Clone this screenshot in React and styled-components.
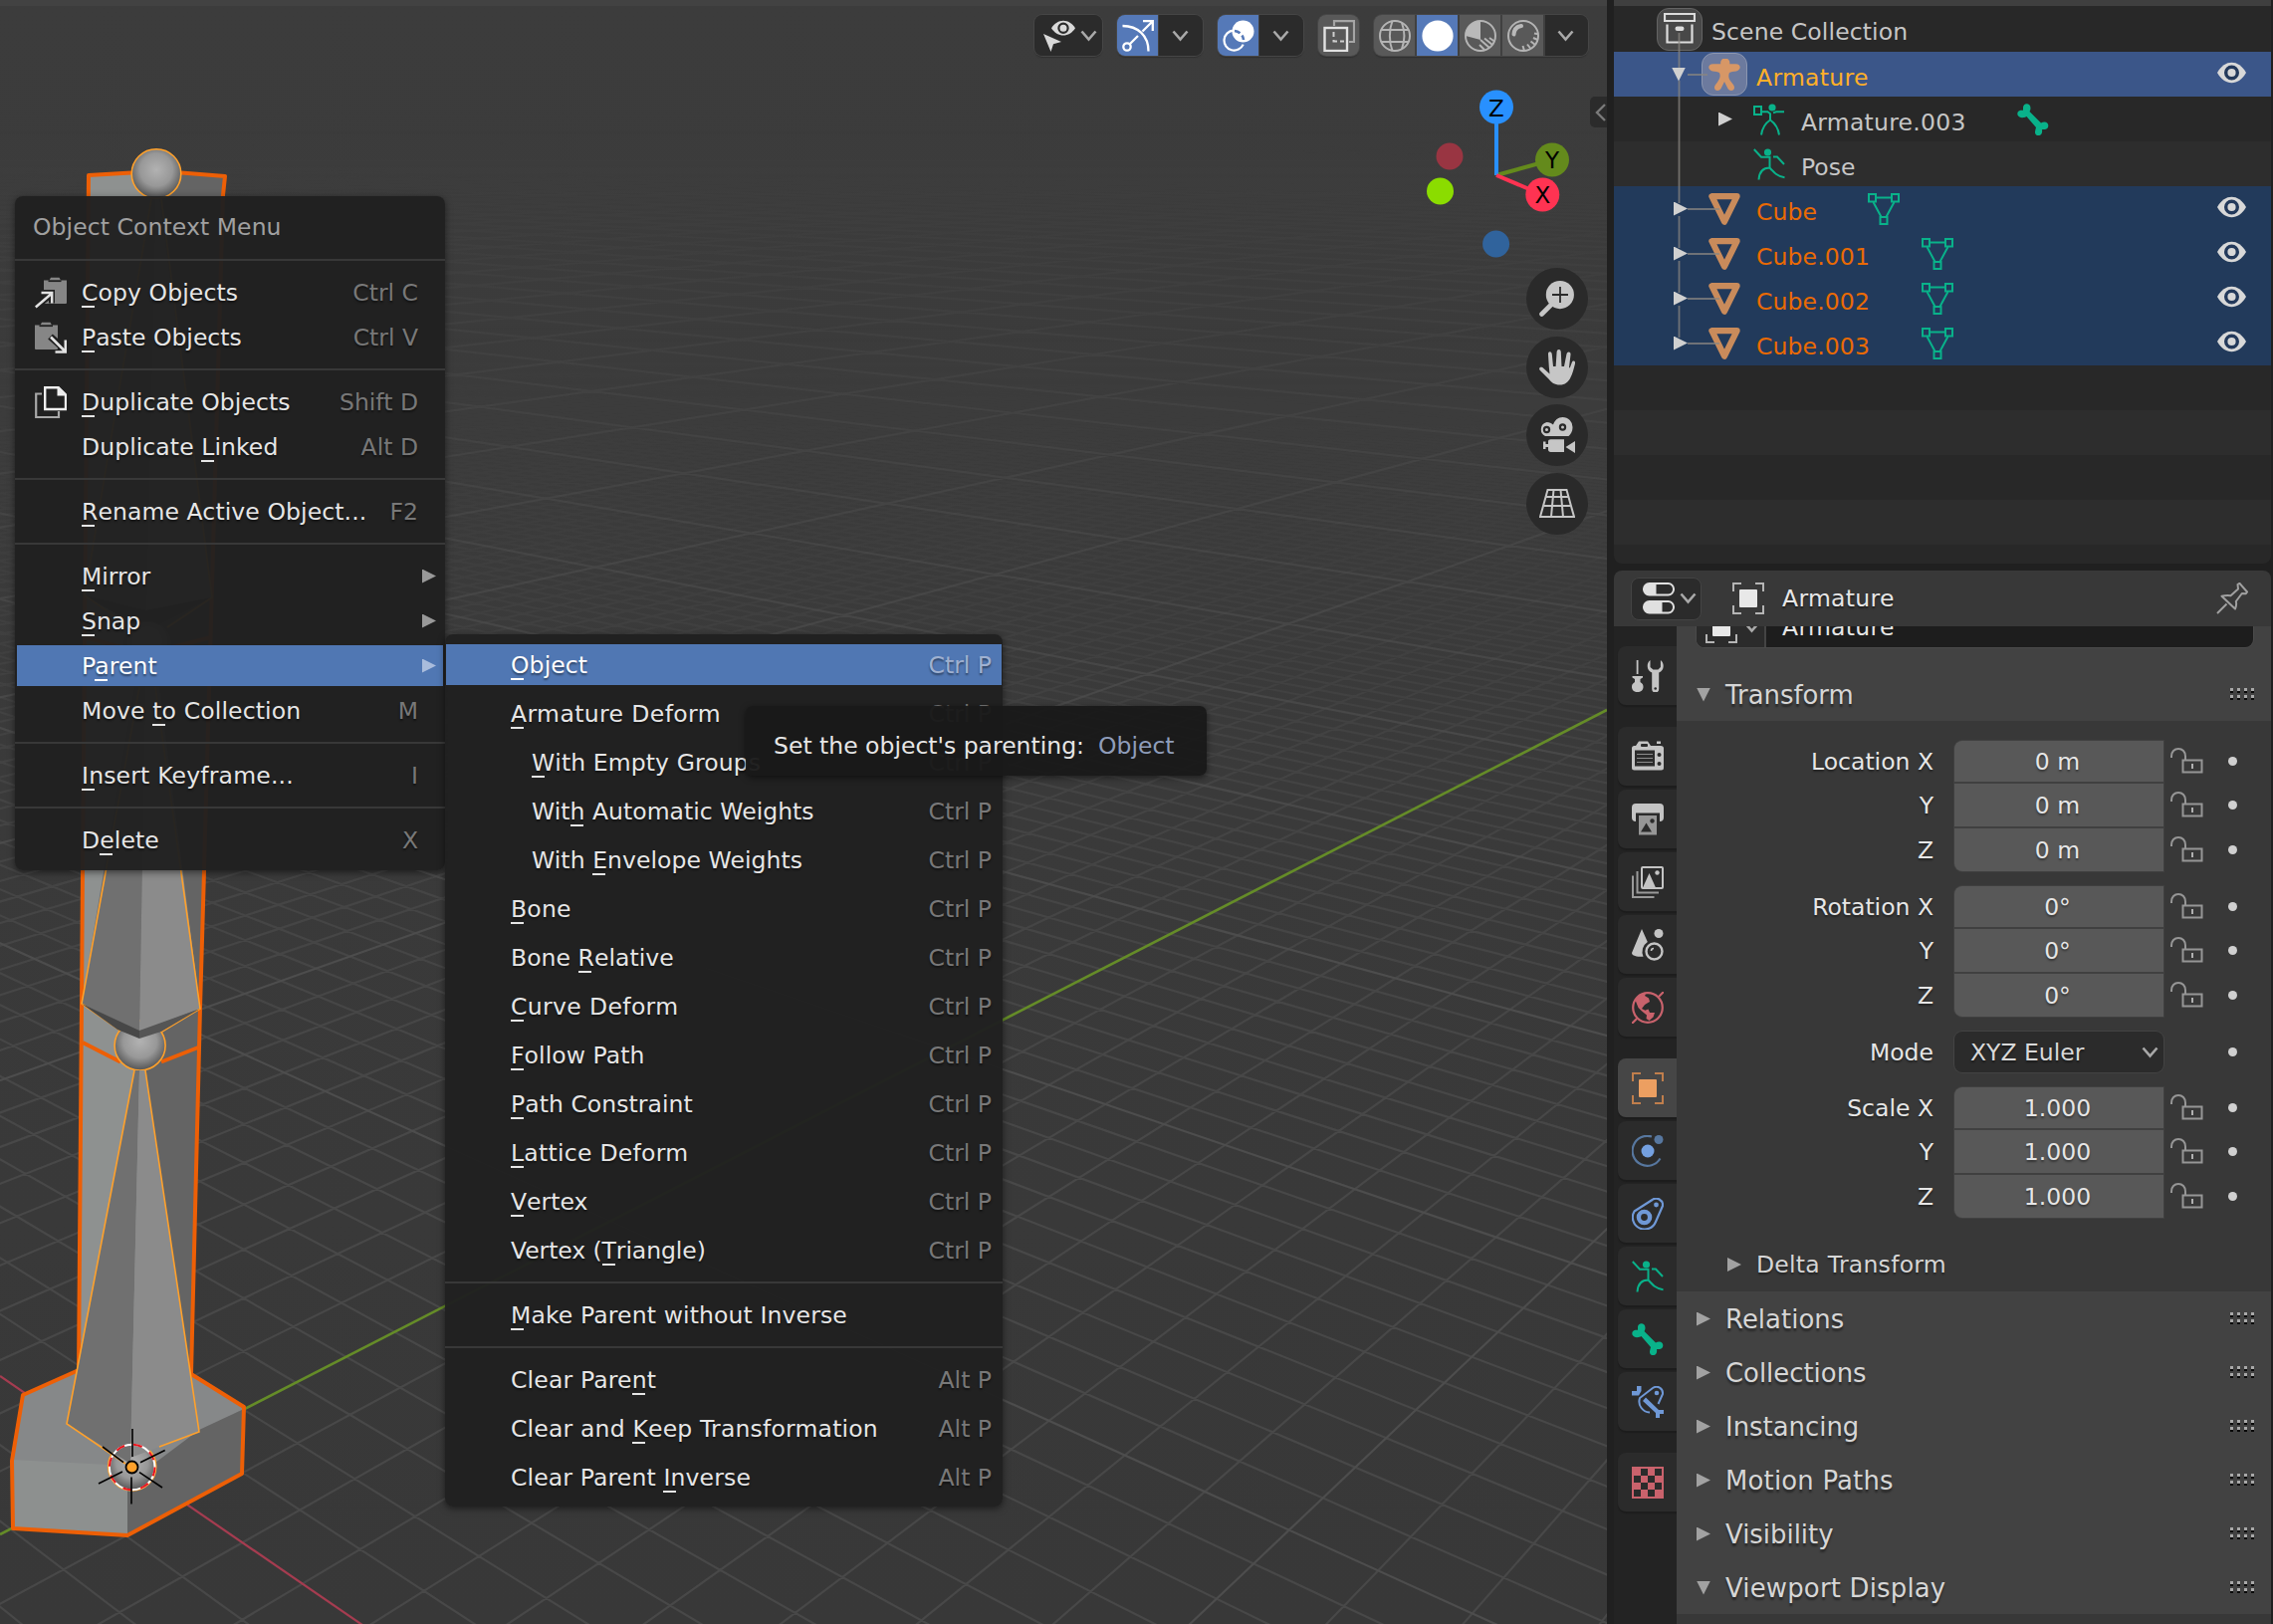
import React from "react";
import styled, { createGlobalStyle, css } from "styled-components";

const Global = createGlobalStyle`
  * { box-sizing: border-box; }
  html, body { margin: 0; padding: 0; background: #202020; overflow: hidden; }
  body { font-family: "DejaVu Sans", sans-serif; font-size: 23.5px; color: #e6e6e6; }
  svg { display: block; flex: none; }
`;

/* ------------------------------------------------------------------ icons */

const L = "#c4c4c4";
const TEAL = "#09b28a";
const ORANGE = "#c98b5b";
const BLUE = "#6f98d6";
const RED = "#c9626c";

const glyphs = {
  copy: (
    <>
      <path d="M9 3.500h5.500L16 .8h8.500L26 3.500h6V26q0 1-1 1H10q-1 0-1-1z" fill="#868686" />
      <path d="M13.500 4.200h13" stroke="#202020" strokeWidth="1.800" />
      <path d="M0 30.500 16 18" stroke="#202020" strokeWidth="6.500" />
      <path d="M6.500 16H17v10.500" stroke="#202020" strokeWidth="6" fill="none" />
      <path d="M.8 30.500 16 17.500M6.500 16H17.200v10.500" stroke="#e2e2e2" strokeWidth="2.500" fill="none" />
    </>
  ),
  paste: (
    <>
      <path d="M0 3.500h5.500L7 .8h8.500L17 3.500h6V27q0 1-1 1H1q-1 0-1-1z" fill="#868686" />
      <path d="M4.500 4.200h13.500" stroke="#202020" strokeWidth="1.800" />
      <path d="M15.500 15 30 28" stroke="#202020" strokeWidth="7" />
      <path d="M16 15.500 30 29.500M30.800 18.500v12H20.500" stroke="#e2e2e2" strokeWidth="2.600" fill="none" />
    </>
  ),
  duplicate: (
    <>
      <path d="M7 7.500H1.200v23.500H24V25" fill="none" stroke="#a8a8a8" strokeWidth="2.200" />
      <path d="M10.200 1.200h13.500L31 8.500V23H10.200z" fill="none" stroke="#efefef" strokeWidth="2.400" />
      <path d="M22.500 1v8.500H31z" fill="#efefef" />
    </>
  ),
  eyeCursor: (
    <>
      <path d="M8 8.200C11 3.500 15.500.8 20 .8s9 2.700 12 7.400c-3 4.700-7.500 7.300-12 7.300S11 12.900 8 8.200z" fill="#d9d9d9" />
      <circle cx="20" cy="8.200" r="4.600" fill="none" stroke="#2b2b2b" strokeWidth="2.200" />
      <path d="M0 14l18 8-8 2.200L7.500 32z" fill="#d9d9d9" />
    </>
  ),
  gizmo: (
    <g fill="none" stroke="#fff" strokeWidth="2.300">
      <path d="M.5 6C16 6 26.500 16 26.500 31.500" />
      <path d="M21 1.200h9.800V11M30.500 1.500 20.500 11.500" />
      <circle cx="5" cy="27" r="3.700" />
      <path d="M8 24l8-8" />
    </g>
  ),
  overlay: (
    <>
      <circle cx="20.500" cy="11.500" r="11" fill="#fff" />
      <path d="M11 10.600a10 10 0 1 0 9.700 14" fill="none" stroke="#fff" strokeWidth="2.200" />
      <path d="M12 11a10 10 0 0 1 9 9" fill="none" stroke="#5579b8" strokeWidth="2.600" strokeDasharray="6 3" />
    </>
  ),
  xray: (
    <g fill="none">
      <path d="M11 6V1.200h20V22h-5" stroke="#a5a5a5" strokeWidth="2.200" />
      <rect x="1.500" y="8" width="22.500" height="23" stroke="#e2e2e2" strokeWidth="2.400" />
      <path d="M10.500 12v9.500H21" stroke="#cfcfcf" strokeWidth="2" strokeDasharray="5 3" />
    </g>
  ),
  wire: (
    <g fill="none" stroke="#b4b4b4" strokeWidth="2">
      <circle cx="16" cy="16" r="15" />
      <path d="M2.500 10h27M2.500 22h27M13.500 1c-3.500 9-3.500 21 0 30M23 3c3 8 3 18 0 26" />
    </g>
  ),
  solid: <circle cx="16" cy="16" r="15.600" fill="#fff" />,
  material: (
    <>
      <circle cx="16" cy="16" r="15" fill="none" stroke="#b4b4b4" strokeWidth="2" />
      <path d="M16 20V1A15 15 0 0 0 1 16z" fill="#b9b9b9" />
      <path d="M16 20l9 8M20 18.500l8 6.500M25 18l5 3.500M15 25l5 5" stroke="#b4b4b4" strokeWidth="2" />
    </>
  ),
  rendered: (
    <>
      <circle cx="16" cy="16" r="15" fill="none" stroke="#b4b4b4" strokeWidth="2" />
      <path d="M6.500 14.500c.3-4.500 2.800-7.800 7.500-8.500" stroke="#b9b9b9" strokeWidth="4" fill="none" strokeLinecap="round" />
      <path d="M27 13.500l4 .8M26 18l4.500 2M23.500 21.500l4.500 3.500M20 24.500l3.500 4.500M15.500 26l1.500 5" stroke="#b4b4b4" strokeWidth="2" />
    </>
  ),
  zoom: (
    <>
      <circle cx="21.500" cy="14.500" r="14.500" fill="#c6c6c6" transform="scale(.97)" />
      <path d="M12 24 2.500 33.500" stroke="#c6c6c6" strokeWidth="4.600" strokeLinecap="round" />
      <path d="M13 14h16M21 6v16" stroke="#2a2a2a" strokeWidth="1.800" />
    </>
  ),
  hand: (
    <path
      d="M9.800 17.500 9 5c-.3-3.600 3.400-3.800 3.800-.3L14 17h2.600l1-14.500c.3-3.300 4-3.300 4.200 0L22.500 17H25l2.500-12.500c.7-3.200 4.500-2.600 4 .8L30 18l.8.500 2-5.500c1-2.500 4-1.500 3.200 1.200-1.200 4.800-2.400 9.800-4.600 14-2.300 4.600-5.400 7.300-10.800 7.300-5.300 0-8.300-2.200-11.200-6L.6 20.800C-.8 18.400 1 17 3.300 18l7.200 6.500z"
      fill="#c6c6c6"
    />
  ),
  camera: (
    <>
      <path d="M7.500 5c3 0 4.500 1 6.500 2.500C15.500 3 19 0 23.500 0a10 10 0 0 1 10 10.500c0 4-2 6.500-4 8.500H6a7.500 7.500 0 0 1 1.500-14z" fill="#c6c6c6" />
      <circle cx="7.500" cy="12.500" r="2.600" fill="none" stroke="#2a2a2a" strokeWidth="2.200" />
      <circle cx="23.500" cy="10" r="2.600" fill="none" stroke="#2a2a2a" strokeWidth="2.200" />
      <path d="M9 24.500c0-1.500 1-2.300 2.500-2.300H25V35H11.500C10 35 9 34 9 32.500V30H6.500v2H4v-7.500h2.500V27H9zM26.500 30l9.500-6v12z" fill="#c6c6c6" />
    </>
  ),
  ortho: (
    <g fill="none" stroke="#c6c6c6" strokeWidth="2">
      <path d="M8.500 4h19L35 31H1zM7 11h22M5 20h26M14.500 4 12 31M21.500 4 24 31" />
    </g>
  ),
  collection: (
    <>
      <path d="M1 1h30v7H1zM3.500 11.500V29.500h25V11.500" fill="none" stroke="#dcdcdc" strokeWidth="2.200" />
      <rect x="11.500" y="13.500" width="9" height="4.500" rx="2.200" fill="#dcdcdc" />
    </>
  ),
  armature: (
    <path
      d="M4.500 5.200h7.800a4.600 4.600 0 1 1 8.900 0h6.300c5.500 0 5.500 6.300.5 7.200-3 .3-5.500.6-7 1.600-1.500 4-.5 6.500 2 9.600 2 2.400 3 4 3 5.400 0 3.500-4.800 4-6.500 1L16 23l-3.500 7c-1.700 3-6.500 2.500-6.500-1 0-1.700 1-3.200 3-5.600 2.200-3 3.500-5.200 2-9.400-1.500-1-4-1.300-7-1.600C-1 11.500-1 5.200 4.500 5.200z"
      fill="#d79766"
    />
  ),
  meshObject: <path d="M3.400 3.200h25.200L16 28.700z" fill="none" stroke={ORANGE} strokeWidth="6.200" strokeLinejoin="round" />,
  meshData: (
    <g fill="none" stroke={TEAL} strokeWidth="2">
      <path d="M9 4.500h14M5.500 9l7.800 14.500M26.500 9l-7.800 14.500" />
      <rect x="1" y="1" width="7" height="7.500" />
      <rect x="24" y="1" width="7" height="7.500" />
      <rect x="12.500" y="24" width="7" height="7" />
    </g>
  ),
  armatureData: (
    <>
      <rect x="1" y="3" width="7" height="8" fill="none" stroke={TEAL} strokeWidth="2" />
      <circle cx="19" cy="4" r="3.600" fill={TEAL} />
      <path d="M8 8.200h6.500l2.500 2V17M31 8.200h-8l-3 1.200M17 16.500c-6 4-8 8-9 15M17 16.500c6 4 8 8 9 15" fill="none" stroke={TEAL} strokeWidth="2" />
    </>
  ),
  pose: (
    <>
      <circle cx="14.500" cy="4" r="3.600" fill={TEAL} />
      <path d="M.8 1 8 8.800h8.500V20M20 8.500h4L31 16M16.500 19.500C9 19.500 6 24 5.500 31.500M16.500 19.500c4.500 5 8 9 15 9.700" fill="none" stroke={TEAL} strokeWidth="2" />
    </>
  ),
  bone: (
    <path
      d="M6 4c0-5 7.500-5 7.500.5 0 2-1 3.500-1 3.500L24 19.500c1-.6 2.200-1 3.500-1 5 0 5 7 .5 7.500-1.500.2-3 0-3 0 .2 1 .2 1.500 0 3-.8 4.500-7.500 4-7-.8.200-1.800.8-3.200 1-4.200L9.500 13c-1 .6-2.500 1.200-4.500 1.200C-1 14-1 7.500 3.500 6.800c1-.2 2.500 0 2.500 0z"
      fill={TEAL}
    />
  ),
  eye: (
    <>
      <path d="M0 16C4 9 9 5.800 14.500 5.800S25 9 29 16c-4 7-9 10.200-14.500 10.200S4 23 0 16z" fill="#d8d8d8" />
      <circle cx="14.500" cy="16" r="5.800" fill="none" stroke="#23395b" strokeWidth="3.400" />
    </>
  ),
  properties: (
    <>
      <rect x="1" y="1" width="30" height="11.500" rx="5.500" fill="#2b2b2b" stroke="#e0e0e0" strokeWidth="2" />
      <path d="M13.500 1H6.500a5.700 5.700 0 0 0 0 11.500h7z" fill="#e0e0e0" />
      <rect x="1" y="19" width="30" height="11.500" rx="5.500" fill="#2b2b2b" stroke="#e0e0e0" strokeWidth="2" />
      <path d="M19.500 19H6.500a5.700 5.700 0 0 0 0 11.500h13z" fill="#e0e0e0" />
    </>
  ),
  object: (
    <>
      <path d="M1 9V1h8M23 1h8v8M31 23v8h-8M9 31H1v-8" fill="none" stroke="#b5b5b5" strokeWidth="2" />
      <rect x="7" y="7" width="18" height="18" rx="1" fill="#e8e8e8" />
    </>
  ),
  pin: (
    <path d="M1 31 10.500 21.500M5.500 13.800c3.500-1 6.500-.8 9-.6L22 6.500 21.500 2 23.500.8 31 9.500l-1.200 1.800-4-.3-6 8c.8 3 .3 5-.8 7.500z" fill="none" stroke="#a0a0a0" strokeWidth="2" strokeLinejoin="round" />
  ),
  tool: (
    <>
      <path d="M5.600 0v14" stroke={L} strokeWidth="1.800" />
      <path d="M.5 16h10.500v1.500L8.500 19v3c2.500 1.500 3 3 3 5 0 3-2.500 5-5.800 5S0 30 0 27c0-2 .5-3.500 3-5v-3L.5 17.500z" fill={L} />
      <path d="M18.500 0c-2 1.500-2.800 3.700-2.800 6 0 3 1.800 5.500 4.500 6.500V29a3.500 3.500 0 0 0 7 0V12.500c2.700-1 4.500-3.500 4.500-6.500 0-2.300-.8-4.500-2.800-6v7l-2.500 2.500h-5L18.500 7z" fill={L} />
      <circle cx="23.700" cy="28.500" r="1.300" fill="#2b2b2b" />
    </>
  ),
  render: (
    <>
      <path d="M0 7.500Q0 5 2.500 5H4l3-4.500h9L19 5h10q3 0 3 2.500V27q0 2.500-2.500 2.500h-27Q0 29.500 0 27zM25 .5h4V3h-4z" fill={L} />
      <path d="M3 9.500h20V25.500H3z" fill="#2b2b2b" />
      <path d="M5 13.500h16M5 17.500h16M5 21.500h16" stroke="#8c8c8c" strokeWidth="1.200" />
      <circle cx="27.500" cy="14" r="2" fill="#2b2b2b" />
      <circle cx="27.500" cy="23" r="2" fill="#2b2b2b" />
      <rect x="9" y="3" width="7" height="3" rx="1" fill="#2b2b2b" />
    </>
  ),
  output: (
    <>
      <path d="M0 4q0-4 4-4h24q4 0 4 4v10q0 4-4 4V9.500H4V18q-4 0-4-4z" fill={L} />
      <path d="M7 12h18v19.500H7z" fill="#969696" />
      <path d="M9 28.500l5.500-9 5.500 9z" fill="#2b2b2b" />
      <circle cx="20.500" cy="17.500" r="2.200" fill="#2b2b2b" />
    </>
  ),
  viewLayer: (
    <>
      <rect x="10" y="1" width="21" height="21" rx="1" fill="none" stroke={L} strokeWidth="2" />
      <path d="M11 21.500 17.500 7l6.500 14.500z" fill={L} />
      <circle cx="25.500" cy="6.500" r="2.200" fill={L} />
      <path d="M5.500 5v21.500H27M1 9.500V31h21.500" fill="none" stroke="#9a9a9a" strokeWidth="2" />
    </>
  ),
  scene: (
    <>
      <path d="M10 0l5.800 13a12 12 0 0 0-4.300 14.800C7 28 0 27.500 0 24z" fill={L} />
      <circle cx="27" cy="4.500" r="4.500" fill={L} />
      <circle cx="22.500" cy="22.500" r="8" fill="none" stroke={L} strokeWidth="2.400" />
      <path d="M19.500 22c0-1.500 1-2.500 2.500-2.500" fill="none" stroke={L} strokeWidth="1.600" />
    </>
  ),
  world: (
    <>
      <circle cx="16" cy="16" r="14.800" fill="none" stroke={RED} strokeWidth="2.200" />
      <path d="M3.500 8.500C6 4.500 9.500 2 14 2l-1 2 4 2.500 1 3.500-5 3-3 4 3 1.500-.5 3-3-2.500-3-3zM12.500 19l4-1.500 1.500 3.500h5l-1.500 4.500-4 3.500-3-2 .5-3.500-2.500-2z" fill={RED} />
      <path d="M27 5l5-5M0 32l5-5" stroke={RED} strokeWidth="2.200" />
    </>
  ),
  objectTab: (
    <>
      <path d="M1 9V1h8M23 1h8v8M31 23v8h-8M9 31H1v-8" fill="none" stroke="#c07e4c" strokeWidth="2" />
      <rect x="7" y="7" width="18" height="18" rx="1" fill="#ec9f61" />
    </>
  ),
  physics: (
    <>
      <circle cx="16" cy="16" r="6.500" fill="#74a0e0" />
      <circle cx="27" cy="4.500" r="4.500" fill="#57779f" />
      <path d="M20 1.500a15 15 0 1 0 8.500 22" fill="none" stroke="#57779f" strokeWidth="2.200" />
    </>
  ),
  constraint: (
    <>
      <path d="M2.500 13.500 20.500 2C25-1.500 31.500 2 31 8L24 24A12 12 0 1 1 2.500 13.500z" fill="none" stroke={BLUE} strokeWidth="2.200" />
      <circle cx="12.500" cy="19.500" r="5.600" fill="none" stroke={BLUE} strokeWidth="4.400" />
      <circle cx="24.500" cy="7" r="2.400" fill={BLUE} />
    </>
  ),
  boneConstraint: (
    <>
      <path d="M18 26.500A11 11 0 0 1 8 12L21 2c4.500-3 10.500 0 10 6l-4.500 10" fill="none" stroke={BLUE} strokeWidth="2" />
      <circle cx="25" cy="7" r="2.300" fill={BLUE} />
      <path d="M0 5h5V0h4.500v5L7 9.500H0zM14 11.500 27 24h5v4h-4v4.500h-4V27L11 15z" fill={BLUE} />
    </>
  ),
  texture: (
    <>
      <rect x="1" y="1" width="30" height="30" fill="#2b2b2b" stroke={RED} strokeWidth="2" />
      <path d="M2 2h7v7H2zM16 2h7v7h-7zM9 9h7v7H9zM23 9h7v7h-7zM2 16h7v7H2zM16 16h7v7h-7zM9 23h7v7H9zM23 23h7v7h-7z" fill={RED} />
    </>
  ),
  lock: (
    <g fill="none" stroke="#969696" strokeWidth="2">
      <path d="M1 10V8.500C1 4 4 1 8 1s7 3 7 7.500V12" />
      <rect x="12.500" y="12.500" width="19" height="12" />
      <path d="M22 16v5" stroke="#b0b0b0" />
    </g>
  ),
};

function Glyph({ name, size = 32, box = 32 }) {
  return (
    <svg width={size} height={size} viewBox={`0 0 ${box} ${box}`}>
      {glyphs[name]}
    </svg>
  );
}

const Chevron = ({ color = "#a9a9a9" }) => (
  <svg width="17" height="12" viewBox="0 0 17 12">
    <path d="M1.500 1.500 8.500 9.500l7-8" fill="none" stroke={color} strokeWidth="2.600" />
  </svg>
);

const Triangle = styled.i`
  flex: none;
  width: 14px;
  height: 14px;
  background: ${(p) => p.$color || "#a2a2a2"};
  clip-path: ${(p) => (p.$open ? "polygon(0 0, 100% 0, 50% 100%)" : "polygon(0 0, 100% 50%, 0 100%)")};
`;

/* --------------------------------------------------------------- 3D scene */

const CAM = { cx: 30, cy: 867, f: 2201, d: 27.9 };

function project(X, Y) {
  const a = X / CAM.d;
  const b = Y / CAM.d;
  const w = 1 - 0.729 * a + 0.603 * b;
  return [
    CAM.cx + (CAM.f * (0.0465 + 0.634 * a + 0.767 * b)) / w,
    CAM.cy - (CAM.f * (-0.2753 - 0.2575 * a + 0.215 * b)) / w,
  ];
}

function segment(axis, n) {
  const far = 60000;
  let from;
  let to;
  if (axis === "y") {
    const near = ((0.25 - 1 + (0.729 * n) / CAM.d) / 0.603) * CAM.d;
    from = project(n, near);
    to = project(n, far);
  } else {
    const near = ((1 - 0.25 + (0.603 * n) / CAM.d) / 0.729) * CAM.d;
    from = project(near, n);
    to = project(-far, n);
  }
  return `M${from[0].toFixed(1)} ${from[1].toFixed(1)}L${to[0].toFixed(1)} ${to[1].toFixed(1)}`;
}

function gridPath(step, count, skip) {
  let d = "";
  for (let i = -count; i <= count; i++) {
    if (i === 0 || (skip && i % skip === 0)) continue;
    d += segment("x", i * step) + segment("y", i * step);
  }
  return d;
}

const minor = gridPath(1, 160, 10);
const major = gridPath(10, 60);

const SceneCanvas = styled.svg`
  position: absolute;
  inset: 0;
  width: 1614px;
  height: 1631px;
`;

const Scene = () => (
  <SceneCanvas viewBox="0 0 1614 1631">
    <defs>
      <linearGradient id="bg" x1="0" y1="0" x2="0" y2="1">
        <stop offset="0" stopColor="#3c3c3c" />
        <stop offset="1" stopColor="#383838" />
      </linearGradient>
      <linearGradient id="fadeMinor" x1="0" y1="0" x2="0" y2="1">
        <stop offset=".2" stopColor="#000" />
        <stop offset=".36" stopColor="#555" />
        <stop offset=".5" stopColor="#b8b8b8" />
        <stop offset=".7" stopColor="#fff" />
      </linearGradient>
      <linearGradient id="fadeMajor" x1="0" y1="0" x2="0" y2="1">
        <stop offset=".08" stopColor="#000" />
        <stop offset=".2" stopColor="#4c4c4c" />
        <stop offset=".35" stopColor="#999" />
        <stop offset=".6" stopColor="#fff" />
      </linearGradient>
      <mask id="mMinor"><rect width="1614" height="1631" fill="url(#fadeMinor)" /></mask>
      <mask id="mMajor"><rect width="1614" height="1631" fill="url(#fadeMajor)" /></mask>
      <radialGradient id="ball" cx=".5" cy=".42" r=".55">
        <stop offset="0" stopColor="#b2b2b2" />
        <stop offset=".6" stopColor="#989898" />
        <stop offset="1" stopColor="#5c5c5c" />
      </radialGradient>
    </defs>
    <rect width="1614" height="1631" fill="url(#bg)" />
    <g mask="url(#mMinor)"><path d={minor} stroke="#484848" strokeWidth="2.200" fill="none" /></g>
    <g mask="url(#mMajor)"><path d={major} stroke="#4d4d4d" strokeWidth="2.200" fill="none" /></g>
    <path d="M0 1382 364 1632" stroke="#a53c50" strokeWidth="2.200" />
    <path d="M0 1541 1614 713" stroke="#658c28" strokeWidth="2.600" />

    {/* foot block */}
    <path d="M77 1376 23 1401 12 1467 13 1535 128 1542 243 1480 245 1413 192 1380z" fill="#868889" />
    <path d="M12 1466 110 1471 128 1490V1542L13 1535z" fill="#8d908f" />
    <path d="M128 1490 200 1436 245 1415 243 1480 128 1542z" fill="#646464" />
    {/* leg block */}
    <path d="M88 176 157 174V1400H78L82 1008z" fill="#8e9190" />
    <path d="M157 174 226 176 224 196 205 875 201 1012 192 1400H140V700z" fill="#646464" />
    <g fill="none" stroke="#ed5f06" strokeWidth="4" strokeLinejoin="round">
      <path d="M132 173.500 89 176 83 875 82 1008 79 1376 23 1401 12 1467 13 1535 128 1542 243 1480 245 1413 192 1380 201 1012 205 875 224 196 226 177 182 173.500" />
      <path d="M83 1047 121 1066.500M162 1066.500 199 1052" />
      <path d="M85 640 130 652M165 652 212 640" />
    </g>

    {/* bones */}
    <path d="M157 175 85 598 147 613 160 300z" fill="#707070" />
    <path d="M157 175 213 600 147 613z" fill="#8b8b8b" />
    <path d="M85 598 147 613 213 600 147 634z" fill="#3c3c3c" />
    <ellipse cx="140.600" cy="1050" rx="25.500" ry="25" fill="url(#ball)" stroke="#ffa12b" strokeWidth="1.600" />
    <path d="M135 690 82 1008 140 1036 146 690z" fill="#707070" />
    <path d="M160 690 201 1013 140 1036 146 690z" fill="#8b8b8b" />
    <path d="M152 200 85 598 130 630M162 200 213 600 168 630M140 690 82 1008 120 1034.500M156 690 201 1013 162 1036.500" fill="none" stroke="#ffa12b" strokeWidth="1.600" />
    <path d="M82 1008 140 1035V1043L118 1034z" fill="#474747" />
    <path d="M201 1013 140 1035V1043L162 1036z" fill="#555" />
    <circle cx="148" cy="648" r="24" fill="url(#ball)" />
    <circle cx="157" cy="174.500" r="24.800" fill="url(#ball)" stroke="#ffa12b" strokeWidth="1.600" />
    <circle cx="132.700" cy="1473" r="24" fill="url(#ball)" stroke="#ffa12b" strokeWidth="1.600" />
    <path d="M135 1075 67 1430 131 1470 140 1075z" fill="#707070" />
    <path d="M146 1075 200 1438 131 1464 140 1075z" fill="#8b8b8b" />
    <path d="M135 1075 67 1430 126 1470M146 1075 200 1438 160 1453" fill="none" stroke="#ffa12b" strokeWidth="1.600" />

    {/* 3D cursor and origin point */}
    <circle cx="132.700" cy="1473.500" r="22.800" fill="none" stroke="#fff" strokeWidth="2" />
    <circle cx="132.700" cy="1473.500" r="22.800" fill="none" stroke="#e8141c" strokeWidth="2" strokeDasharray="9 9" />
    <path d="M133 1435V1463M132 1483.500V1510.500M103 1453 124 1468.700M141 1468.700 165.700 1456.500M99 1490 123 1478M140 1478.600 163 1494" stroke="#000" strokeWidth="1.600" />
    <circle cx="132.500" cy="1473.500" r="6" fill="#ffa12b" stroke="#000" strokeWidth="1.800" />
  </SceneCanvas>
);

/* --------------------------------------------------------- viewport header */

const Viewport = styled.main`
  position: relative;
  height: 1631px;
  overflow: hidden;
`;

const TopStrip = styled.div`
  position: relative;
  height: 6px;
  background: ${(p) => p.$bg};
`;

const HeaderBar = styled.header`
  position: relative;
  display: flex;
  justify-content: flex-end;
  gap: 15px;
  padding: 9px 19px 0 0;
`;

const ButtonGroup = styled.div`
  display: flex;
  gap: ${(p) => p.$gap ?? 1}px;
  height: 41px;
  border-radius: 8px;
  overflow: hidden;
  background: #404040;
  box-shadow: 0 0 0 1px #464646, 0 2px 1px #303030;
`;

const HeaderButton = styled.div`
  display: flex;
  align-items: center;
  justify-content: ${(p) => (p.$spread ? "space-between" : "center")};
  width: ${(p) => p.$w || 41}px;
  padding: ${(p) => (p.$spread ? "0 5px 0 9px" : p.$kind === "menu" ? "0 2px 0 0" : "0")};
  background: ${(p) => (p.$kind === "on" ? "#5579b8" : p.$kind === "menu" ? "#2b2b2b" : "#595959")};
`;

const SidebarTab = styled.div`
  position: absolute;
  top: 97px;
  right: 0;
  width: 17px;
  height: 31px;
  display: flex;
  align-items: center;
  justify-content: flex-end;
  padding-right: 1px;
  background: #2b2b2b;
  border-radius: 5px 0 0 5px;
`;

const AxisGizmo = styled.svg`
  position: absolute;
  left: 1423px;
  top: 86px;
  font-size: 23px;
  text-anchor: middle;
`;

const NavColumn = styled.div`
  position: absolute;
  left: 1533px;
  top: 269px;
  display: flex;
  flex-direction: column;
  gap: 6.600px;
`;

const NavButton = styled.div`
  width: 62px;
  height: 62px;
  border-radius: 50%;
  background: #2a2a2a;
  display: flex;
  align-items: center;
  justify-content: center;
`;

/* ------------------------------------------------------------------ menus */

const MenuPanel = styled.section`
  position: absolute;
  left: ${(p) => p.$x}px;
  top: ${(p) => p.$y}px;
  width: ${(p) => p.$w}px;
  padding: ${(p) => p.$pad};
  display: flex;
  flex-direction: column;
  background: rgba(32, 32, 32, 0.965);
  border-radius: 8px;
  box-shadow: 0 2px 7px rgba(0, 0, 0, 0.5);
`;

const MenuTitle = styled.h2`
  margin: 0;
  height: 54px;
  padding: 0 0 0 18px;
  font: inherit;
  letter-spacing: 0.08px;
  line-height: 63px;
  color: #a0a0a0;
`;

const MenuRule = styled.hr`
  flex: none;
  width: 100%;
  height: 2px;
  margin: 9px 0;
  border: 0;
  background: #383838;
`;

const MenuRow = styled.div`
  display: flex;
  align-items: center;
  height: 45px;
  margin-bottom: ${(p) => p.$gap || 0}px;
  padding-right: ${(p) => p.$pr}px;
  text-shadow: 0 2px 2px rgba(0, 0, 0, 0.45);
  white-space: pre;
  ${(p) =>
    p.$active &&
    css`
      background: linear-gradient(#5077b3, #5077b3) ${p.$inset}px 2px / calc(100% - ${p.$inset * 2}px) 41px no-repeat;
      color: #fff;
    `}
`;

const MenuIcon = styled.span`
  width: ${(p) => p.$w}px;
  padding-left: ${(p) => p.$left}px;
  flex: none;
`;

const ItemText = styled.span`
  letter-spacing: ${(p) => p.$ls || 0}px;
`;

const Key = styled.u`
  position: relative;
  text-decoration: none;
  &::after {
    content: "";
    position: absolute;
    left: 0;
    bottom: -1px;
    width: 13px;
    height: 2px;
    background: currentColor;
  }
`;

const Shortcut = styled.span`
  margin-left: auto;
  color: ${(p) => (p.$active ? "#9fb1d0" : "#787878")};
`;

const ArrowSlot = styled.span`
  margin-left: auto;
  display: flex;
`;

function Accel({ text, ls }) {
  const i = text.indexOf("_");
  return (
    <ItemText $ls={ls}>
      {text.slice(0, i)}
      <Key>{text[i + 1]}</Key>
      {text.slice(i + 2)}
    </ItemText>
  );
}

const contextItems = [
  { t: "_Copy Objects", k: "Ctrl C", icon: "copy", ls: 0.1 },
  { t: "_Paste Objects", k: "Ctrl V", icon: "paste" },
  null,
  { t: "_Duplicate Objects", k: "Shift D", icon: "duplicate", ls: 0.08 },
  { t: "Duplicate _Linked", k: "Alt D", ls: 0.08 },
  null,
  { t: "_Rename Active Object...", k: "F2", ls: 0.1 },
  null,
  { t: "_Mirror", sub: true },
  { t: "_Snap", sub: true },
  { t: "P_arent", sub: true, active: true, ls: 0.1 },
  { t: "Move _to Collection", k: "M", ls: 0.14 },
  null,
  { t: "_Insert Keyframe...", k: "I", ls: 0.18 },
  null,
  { t: "D_elete", k: "X", ls: 0.1 },
];

const parentItems = [
  { t: "_Object", k: "Ctrl P", active: true, ls: 0.1 },
  { t: "_Armature Deform", k: "Ctrl P", ls: 0.39 },
  { t: "_With Empty Groups", k: "Ctrl P", indent: true, ls: 0.1 },
  { t: "Wit_h Automatic Weights", k: "Ctrl P", indent: true, ls: 0.03 },
  { t: "With _Envelope Weights", k: "Ctrl P", indent: true, ls: 0.06 },
  { t: "_Bone", k: "Ctrl P", ls: 0.2 },
  { t: "Bone _Relative", k: "Ctrl P", ls: 0.05 },
  { t: "_Curve Deform", k: "Ctrl P", ls: 0.36 },
  { t: "_Follow Path", k: "Ctrl P", ls: 0.08 },
  { t: "_Path Constraint", k: "Ctrl P", ls: 0.05 },
  { t: "_Lattice Deform", k: "Ctrl P", ls: 0.26 },
  { t: "_Vertex", k: "Ctrl P" },
  { t: "Vertex (_Triangle)", k: "Ctrl P", last: true, ls: -0.08 },
  null,
  { t: "_Make Parent without Inverse", last: true, ls: 0.13 },
  null,
  { t: "Clear Pare_nt", k: "Alt P", ls: 0.16 },
  { t: "Clear and _Keep Transformation", k: "Alt P", ls: 0.18 },
  { t: "Clear Parent _Inverse", k: "Alt P", last: true, ls: 0.14 },
];

const Tooltip = styled.div`
  position: absolute;
  left: 749px;
  top: 709px;
  width: 463px;
  height: 70px;
  padding: 10px 0 0 28px;
  display: flex;
  align-items: center;
  gap: 14px;
  background: rgba(25, 25, 25, 0.955);
  border-radius: 7px;
  box-shadow: 0 2px 6px rgba(0, 0, 0, 0.5);
  white-space: nowrap;
  em { font-style: normal; color: #8f9dba; }
`;

/* --------------------------------------------------------------- outliner */

const Window = styled.div`
  display: grid;
  grid-template-columns: 1614px 660px;
  column-gap: 7px;
  width: 2283px;
  height: 1631px;
  overflow: hidden;
  background: #202020;
`;

const Side = styled.aside`
  display: flex;
  flex-direction: column;
  gap: 7px;
  height: 1631px;
`;

const Outliner = styled.section`
  position: relative;
  flex: none;
  height: 566px;
  overflow: hidden;
  background: #282828;
  border-radius: 0 0 8px 8px;
`;

const TreeRow = styled.div`
  display: flex;
  align-items: center;
  height: ${(p) => p.$h || 45}px;
  padding-left: ${(p) => p.$pl || 0}px;
  padding-right: 22px;
  background: ${(p) => p.$bg};
  color: ${(p) => p.$color || "#c6c6c6"};
  white-space: pre;
`;

const TreeLabel = styled.span`
  padding-top: 6px;
  margin-left: ${(p) => p.$ml}px;
  letter-spacing: ${(p) => p.$ls || 0}px;
`;

const IconPlate = styled.span`
  display: flex;
  align-items: center;
  justify-content: center;
  width: 46px;
  height: 43px;
  border-radius: 12px;
  border: 1px solid ${(p) => p.$edge};
  background: ${(p) => p.$bg};
`;

const Slot = styled.span`
  display: flex;
  flex: none;
  margin-left: ${(p) => p.$ml || 0}px;
`;

const EyeSlot = styled.span`
  display: flex;
  margin-left: auto;
  padding-bottom: 3px;
`;

const TreeLines = styled.svg`
  position: absolute;
  left: 64px;
  top: 33px;
`;

const cubes = [
  ["Cube", 51],
  ["Cube.001", 52],
  ["Cube.002", 52],
  ["Cube.003", 52],
];

/* ------------------------------------------------------------- properties */

const Properties = styled.section`
  flex: 1;
  display: flex;
  flex-direction: column;
  min-height: 0;
  border-radius: 8px 8px 0 0;
  overflow: hidden;
  background: #232323;
`;

const PropHeader = styled.header`
  display: flex;
  align-items: center;
  flex: none;
  height: 56px;
  padding: 0 23px 0 17px;
  background: #383838;
  text-shadow: 0 2px 2px rgba(0, 0, 0, 0.5);
`;

const EditorButton = styled.div`
  display: flex;
  align-items: center;
  gap: 5px;
  width: 71px;
  height: 43px;
  padding-left: 11px;
  border-radius: 8px;
  background: #2b2b2b;
  border: 1px solid #444;
`;

const HeaderTitle = styled.span`
  margin: 0 auto 0 18px;
  letter-spacing: 0.3px;
`;

const PropBody = styled.div`
  display: flex;
  flex: 1;
  min-height: 0;
`;

const Tabs = styled.nav`
  display: flex;
  flex-direction: column;
  gap: 4px;
  flex: none;
  width: 63px;
  padding: 20px 0 0 4px;
`;

const Tab = styled.div`
  flex: none;
  height: 59px;
  margin-bottom: ${(p) => (p.$end ? 18 : 0)}px;
  padding: 14px 0 0 14px;
  border-radius: 8px 0 0 8px;
  background: ${(p) => (p.$active ? "#464646" : "#2b2b2b")};
  box-shadow: 0 2px 1px #1d1d1d;
`;

const Content = styled.div`
  flex: 1;
  min-width: 0;
  background: #424242;
  overflow: hidden;
`;

const IdRow = styled.div`
  display: flex;
  height: 41px;
  margin: -20px 18px 0 20px;
  border-radius: 8px;
  overflow: hidden;
  background: #1d1d1d;
  box-shadow: 0 0 0 1px #4a4a4a;
`;

const IdPicker = styled.div`
  display: flex;
  align-items: center;
  gap: 12px;
  width: 70px;
  padding-left: 9px;
  background: #2b2b2b;
  border-right: 2px solid #444;
  svg + svg { margin-left: -6px; }
`;

const IdName = styled.span`
  padding-left: 16px;
  line-height: 42px;
  letter-spacing: 0.3px;
`;

const PanelHead = styled.header`
  display: flex;
  align-items: center;
  gap: 15px;
  height: 54px;
  padding: 1px 16px 0 20px;
  margin-top: ${(p) => p.$top || 0}px;
  font-size: 25.900px;
  color: #d6d6d6;
  text-shadow: 0 3px 2px rgba(0, 0, 0, 0.4);
`;

const PanelTitle = styled.span`
  margin-right: auto;
  padding-top: 1px;
  letter-spacing: ${(p) => p.$ls || 0}px;
`;

const Grip = styled.i`
  width: 25px;
  height: 13px;
  background-image: linear-gradient(#a8a8a8 0 3px, #0a0a0a 3px 5px, transparent 5px 7px);
  background-size: 100% 7px;
  -webkit-mask-image: repeating-linear-gradient(90deg, #000 0 3px, transparent 3px 7px);
  mask-image: repeating-linear-gradient(90deg, #000 0 3px, transparent 3px 7px);
`;

const PanelBody = styled.div`
  height: 573px;
  padding-top: 20px;
  background: #383838;
  text-shadow: 0 2px 2px rgba(0, 0, 0, 0.4);
`;

const FieldGroup = styled.div`
  margin-bottom: 15px;
`;

const FieldRow = styled.div`
  display: grid;
  grid-template-columns: 258px 210px 33px 9px;
  align-items: center;
  height: ${(p) => p.$h}px;
  margin-bottom: ${(p) => (p.$last ? 0 : 2)}px;
`;

const FieldLabel = styled.label`
  text-align: right;
`;

const Field = styled.div`
  margin-left: 21px;
  width: 210px;
  height: 100%;
  display: flex;
  align-items: center;
  justify-content: center;
  padding-right: 3px;
  background: #585858;
  border-radius: ${(p) => (p.$first ? "8px 0 0 0" : p.$last ? "0 0 0 8px" : "0")};
  box-shadow: 0 0 0 1px #404040;
`;

const Select = styled(Field)`
  justify-content: space-between;
  padding: 0 5px 0 16px;
  border-radius: 8px;
  background: #2b2b2b;
  color: #d8d8d8;
  box-shadow: 0 0 0 1px #434343;
`;

const LockCell = styled.span`
  margin-left: 28px;
  padding-bottom: 2px;
`;

const Dot = styled.i`
  margin-left: 53px;
  width: 9px;
  height: 9px;
  border-radius: 50%;
  background: #d0d0d0;
`;

const SubPanel = styled.div`
  display: flex;
  align-items: center;
  gap: 15px;
  height: 50px;
  margin-top: 22px;
  padding-left: 51px;
  color: #d6d6d6;
  letter-spacing: 0.26px;
`;

const LockIcon = () => (
  <svg width="33" height="26" viewBox="0 0 33 26">{glyphs.lock}</svg>
);

function Vector({ name, values }) {
  return (
    <FieldGroup>
      {values.map((v, i) => (
        <FieldRow key={i} $h={i === 0 ? 41 : 43} $last={i === 2}>
          <FieldLabel>{i === 0 ? `${name} X` : "XYZ"[i]}</FieldLabel>
          <Field $first={i === 0} $last={i === 2}>{v}</Field>
          <LockCell><LockIcon /></LockCell>
          <Dot />
        </FieldRow>
      ))}
    </FieldGroup>
  );
}

const tabs = [
  ["tool", true], ["render"], ["output"], ["viewLayer"], ["scene"], ["world", true],
  ["objectTab"], ["physics"], ["constraint"], ["pose"], ["bone"], ["boneConstraint", true], ["texture"],
];

const panels = [
  ["Relations", 0.05],
  ["Collections", 0],
  ["Instancing", 0],
  ["Motion Paths", 0.2],
  ["Visibility", 0],
  ["Viewport Display", 0.2],
];

export default function App() {
  return (
    <Window>
      <Global />
      <Viewport>
        <Scene />
        <TopStrip $bg="#424242" />
        <HeaderBar>
          <ButtonGroup>
            <HeaderButton $kind="menu" $w={68} $spread><Glyph name="eyeCursor" /><Chevron /></HeaderButton>
          </ButtonGroup>
          <ButtonGroup>
            <HeaderButton $kind="on"><Glyph name="gizmo" /></HeaderButton>
            <HeaderButton $kind="menu" $w={44}><Chevron /></HeaderButton>
          </ButtonGroup>
          <ButtonGroup>
            <HeaderButton $kind="on"><Glyph name="overlay" /></HeaderButton>
            <HeaderButton $kind="menu" $w={44}><Chevron /></HeaderButton>
          </ButtonGroup>
          <ButtonGroup>
            <HeaderButton><Glyph name="xray" /></HeaderButton>
          </ButtonGroup>
          <ButtonGroup $gap={2}>
            <HeaderButton><Glyph name="wire" /></HeaderButton>
            <HeaderButton $kind="on"><Glyph name="solid" /></HeaderButton>
            <HeaderButton><Glyph name="material" /></HeaderButton>
            <HeaderButton><Glyph name="rendered" /></HeaderButton>
            <HeaderButton $kind="menu" $w={43}><Chevron /></HeaderButton>
          </ButtonGroup>
        </HeaderBar>
        <AxisGizmo width="170" height="180" viewBox="1423 86 170 180">
          <circle cx="1456" cy="157" r="13.500" fill="#993542" />
          <circle cx="1502.600" cy="245" r="13.500" fill="#30639c" />
          <path d="M1503 176 1559 160.500" stroke="#648a1c" strokeWidth="4" />
          <circle cx="1559" cy="160.500" r="17" fill="#648a1c" />
          <path d="M1503 176V107" stroke="#2890ff" strokeWidth="4" />
          <circle cx="1503" cy="107.500" r="17" fill="#2890ff" />
          <path d="M1503 176 1549 195.500" stroke="#ff3352" strokeWidth="4" />
          <circle cx="1549.300" cy="195.500" r="17" fill="#ff3352" />
          <circle cx="1446.500" cy="192" r="13.500" fill="#8bdc00" />
          <text x="1503" y="116.500">Z</text>
          <text x="1559" y="169">Y</text>
          <text x="1549.300" y="204">X</text>
        </AxisGizmo>
        <NavColumn>
          <NavButton><Glyph name="zoom" size={36} box={36} /></NavButton>
          <NavButton><Glyph name="hand" size={36} box={36} /></NavButton>
          <NavButton><Glyph name="camera" size={36} box={36} /></NavButton>
          <NavButton><Glyph name="ortho" size={36} box={36} /></NavButton>
        </NavColumn>
        <SidebarTab>
          <svg width="11" height="18" viewBox="0 0 11 18"><path d="M10 1 2 9l8 8" fill="none" stroke="#7a7a7a" strokeWidth="2.400" /></svg>
        </SidebarTab>

        <MenuPanel $x={15} $y={197} $w={432} $pad="0 0 8px">
          <MenuTitle>Object Context Menu</MenuTitle>
          <MenuRule />
          {contextItems.map((it, i) =>
            it ? (
              <MenuRow key={i} $active={it.active} $inset={2} $pr={it.sub ? 9 : 27}>
                <MenuIcon $w={67} $left={20}>{it.icon && <Glyph name={it.icon} />}</MenuIcon>
                <Accel text={it.t} ls={it.ls} />
                {it.k && <Shortcut>{it.k}</Shortcut>}
                {it.sub && <ArrowSlot><Triangle $color={it.active ? "#a9bcdc" : "#999"} /></ArrowSlot>}
              </MenuRow>
            ) : (
              <MenuRule key={i} />
            )
          )}
        </MenuPanel>

        <MenuPanel $x={447} $y={637} $w={560} $pad="8px 0 7px">
          {parentItems.map((it, i) =>
            it ? (
              <MenuRow key={i} $active={it.active} $inset={1} $gap={it.last ? 0 : 4} $pr={11}>
                <MenuIcon $w={it.indent ? 87 : 66} $left={0} />
                <Accel text={it.t} ls={it.ls} />
                {it.k && <Shortcut $active={it.active}>{it.k}</Shortcut>}
              </MenuRow>
            ) : (
              <MenuRule key={i} />
            )
          )}
        </MenuPanel>

        <Tooltip>
          <span>Set the object's parenting:</span>
          <em>Object</em>
        </Tooltip>
      </Viewport>

      <Side>
        <Outliner>
          <TopStrip $bg="#3f3f3f" />
          <TreeRow $h={46} $pl={43} $bg="#282828">
            <IconPlate $bg="#484848" $edge="#646464"><Glyph name="collection" /></IconPlate>
            <TreeLabel $ml={9} $ls={0.12}>Scene Collection</TreeLabel>
          </TreeRow>
          <TreeRow $pl={58} $bg="#3b5689" $color="#ffaf29">
            <Triangle $open $color="#d0d0d0" />
            <Slot $ml={16}><IconPlate $bg="#6c7a9e" $edge="#8b96b0"><Glyph name="armature" /></IconPlate></Slot>
            <TreeLabel $ml={9} $ls={0.3}>Armature</TreeLabel>
            <EyeSlot><Glyph name="eye" size={32} /></EyeSlot>
          </TreeRow>
          <TreeRow $pl={105} $bg="#282828">
            <Triangle $color="#d0d0d0" />
            <Slot $ml={21}><Glyph name="armatureData" /></Slot>
            <TreeLabel $ml={16} $ls={0.25}>Armature.003</TreeLabel>
            <Slot $ml={51}><Glyph name="bone" /></Slot>
          </TreeRow>
          <TreeRow $pl={140} $bg="#2d2d2d">
            <Glyph name="pose" />
            <TreeLabel $ml={16}>Pose</TreeLabel>
          </TreeRow>
          {cubes.map(([name, gap]) => (
            <TreeRow key={name} $pl={60} $bg="#223a5b" $color="#ea6a04">
              <Triangle $color="#d0d0d0" />
              <Slot $ml={21}><Glyph name="meshObject" /></Slot>
              <TreeLabel $ml={16} $ls={0.12}>{name}</TreeLabel>
              <Slot $ml={gap}><Glyph name="meshData" /></Slot>
              <EyeSlot><Glyph name="eye" size={32} /></EyeSlot>
            </TreeRow>
          ))}
          <TreeRow $bg="#282828" />
          <TreeRow $bg="#2d2d2d" />
          <TreeRow $bg="#282828" />
          <TreeRow $bg="#2d2d2d" />
          <TreeLines width="50" height="314" viewBox="0 0 50 314">
            <path d="M1.500 0V35M1.500 48V171M1.500 184V216M1.500 229V261M1.500 274V306M10 42H30M10 177H42M10 222H42M10 267H42M10 312H42" stroke="#8a8680" strokeOpacity=".75" strokeWidth="1.800" fill="none" />
          </TreeLines>
        </Outliner>

        <Properties>
          <PropHeader>
            <EditorButton><Glyph name="properties" /><Chevron /></EditorButton>
            <Slot $ml={31}><Glyph name="object" /></Slot>
            <HeaderTitle>Armature</HeaderTitle>
            <Glyph name="pin" />
          </PropHeader>
          <PropBody>
            <Tabs>
              {tabs.map(([name, end]) => (
                <Tab key={name} $end={end} $active={name === "objectTab"}><Glyph name={name} /></Tab>
              ))}
            </Tabs>
            <Content>
              <IdRow>
                <IdPicker><Glyph name="object" /><Chevron /></IdPicker>
                <IdName>Armature</IdName>
              </IdRow>
              <PanelHead $top={20}>
                <Triangle $open />
                <PanelTitle>Transform</PanelTitle>
                <Grip />
              </PanelHead>
              <PanelBody>
                <Vector name="Location" values={["0 m", "0 m", "0 m"]} />
                <Vector name="Rotation" values={["0°", "0°", "0°"]} />
                <FieldGroup>
                  <FieldRow $h={41} $last>
                    <FieldLabel>Mode</FieldLabel>
                    <Select>XYZ Euler<Chevron /></Select>
                    <LockCell />
                    <Dot />
                  </FieldRow>
                </FieldGroup>
                <Vector name="Scale" values={["1.000", "1.000", "1.000"]} />
                <SubPanel><Triangle />Delta Transform</SubPanel>
              </PanelBody>
              {panels.map(([name, ls]) => (
                <PanelHead key={name}>
                  <Triangle $open={name === "Viewport Display"} />
                  <PanelTitle $ls={ls}>{name}</PanelTitle>
                  <Grip />
                </PanelHead>
              ))}
              <PanelBody />
            </Content>
          </PropBody>
        </Properties>
      </Side>
    </Window>
  );
}
